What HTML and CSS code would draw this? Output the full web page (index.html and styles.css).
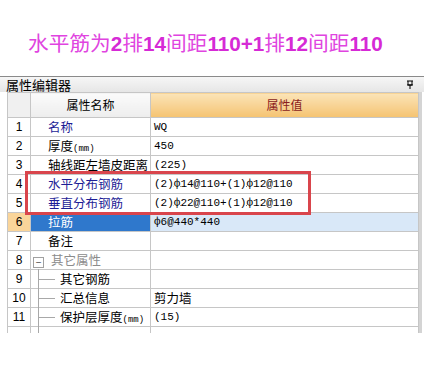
FILE: index.html
```html
<!DOCTYPE html>
<html lang="zh-CN">
<head>
    <meta charset="UTF-8">
    <title>属性编辑器</title>
    <link rel="stylesheet" href="styles.css">
</head>
<body>
    <div class="title">水平筋为<b>2</b>排<b>14</b>间距<b>110+1</b>排<b>12</b>间距<b>110</b></div>

    <div class="panel">
        <div class="panel-head">
            <span>属性编辑器</span>
            <svg class="pin" width="8" height="10" viewBox="0 0 8 10">
                <path d="M1 1h6M2 1v4h4V1M1 5h6M4 5v4" fill="none" stroke="#000" stroke-width="1"/>
            </svg>
        </div>
        <div class="grid-wrap">
            <div class="grid-box">
                <table class="props">
                    <colgroup>
                        <col class="c-num">
                        <col class="c-name">
                        <col class="c-val">
                    </colgroup>
                    <tr class="head">
                        <td class="num"></td>
                        <td class="name-h">属性名称</td>
                        <td class="val-h">属性值</td>
                    </tr>
                    <tr>
                        <td class="num">1</td>
                        <td class="name blue">名称</td>
                        <td class="val">WQ</td>
                    </tr>
                    <tr>
                        <td class="num">2</td>
                        <td class="name">厚度<small>(mm)</small></td>
                        <td class="val">450</td>
                    </tr>
                    <tr>
                        <td class="num">3</td>
                        <td class="name">轴线距左墙皮距离</td>
                        <td class="val">(225)</td>
                    </tr>
                    <tr>
                        <td class="num">4</td>
                        <td class="name blue">水平分布钢筋</td>
                        <td class="val">(2)<span class="g3">ф</span>14@110+(1)<span class="g3">ф</span>12@110</td>
                    </tr>
                    <tr>
                        <td class="num">5</td>
                        <td class="name blue">垂直分布钢筋</td>
                        <td class="val">(2)<span class="g3">ф</span>22@110+(1)<span class="g3">ф</span>12@110</td>
                    </tr>
                    <tr class="selected">
                        <td class="num">6</td>
                        <td class="name">拉筋</td>
                        <td class="val">ф6@440*440</td>
                    </tr>
                    <tr>
                        <td class="num">7</td>
                        <td class="name">备注</td>
                        <td class="val"></td>
                    </tr>
                    <tr>
                        <td class="num">8</td>
                        <td class="name group"><span class="toggle">−</span>其它属性</td>
                        <td class="val"></td>
                    </tr>
                    <tr>
                        <td class="num">9</td>
                        <td class="name child">其它钢筋</td>
                        <td class="val"></td>
                    </tr>
                    <tr>
                        <td class="num">10</td>
                        <td class="name child">汇总信息</td>
                        <td class="val cjk">剪力墙</td>
                    </tr>
                    <tr>
                        <td class="num">11</td>
                        <td class="name child">保护层厚度<small>(mm)</small></td>
                        <td class="val">(15)</td>
                    </tr>
                    <tr class="cut">
                        <td class="num"></td>
                        <td class="name child"></td>
                        <td class="val"></td>
                    </tr>
                </table>
                <div class="mark"></div>
            </div>
            <div class="vbar"></div>
        </div>
    </div>
</body>
</html>
```

FILE: styles.css
```css
body {
    margin: 0;
    background: #fff;
    font-family: "Noto Sans CJK SC", "Liberation Sans", sans-serif;
    color: #000;
}
.title {
    padding: 30px 0 0 28px;
    height: 46px;
    font-size: 20.7px;
    line-height: 25px;
    color: #e044e0;
    box-sizing: content-box;
}
.title b {
    font-family: "Liberation Sans", sans-serif;
    font-weight: bold;
    color: #d62ad6;
}
.panel {
    width: 424px;
}
.panel-head {
    display: flex;
    align-items: center;
    justify-content: space-between;
    height: 15px;
    border-top: 1px solid #8a8a8a;
    background: linear-gradient(#f6f6f6, #e6e6e6);
    padding-left: 6px;
    font-size: 13px;
    line-height: 15px;
}
.pin {
    margin-right: 10px;
}
.grid-wrap {
    display: flex;
    padding-left: 7px;
}
.grid-box {
    position: relative;
}
.props {
    border-collapse: collapse;
    table-layout: fixed;
    width: 412px;
    font-size: 12.5px;
}
.c-num { width: 23px; }
.c-name { width: 120px; }
.props td {
    border: 1px solid #c6c6c6;
    height: 18px;
    padding: 0;
    line-height: 18px;
    white-space: nowrap;
    overflow: hidden;
}
.props .head td {
    height: 24px;
    font-size: 12px;
}
.head .num {
    background: #f0f0f0;
}
.name-h {
    text-align: center;
    background: linear-gradient(#fbfbfb, #ededed);
}
.val-h {
    text-align: center;
    color: #8a1c1c;
    background: linear-gradient(#fbe4b8, #f5c371);
}
.num {
    text-align: center;
    font-family: "Liberation Sans", sans-serif;
    font-size: 12px;
}
.name {
    padding-left: 17px !important;
    position: relative;
}
.name small {
    font-family: "Liberation Mono", monospace;
    font-size: 9px;
    line-height: 0;
}
.blue {
    color: #1d1d96;
}
.val {
    padding-left: 3px !important;
    font-family: "Liberation Mono", monospace;
    font-size: 11px;
}
.val.cjk {
    font-family: "Noto Sans CJK SC", sans-serif;
    font-size: 12.5px;
}
.g3 {
    text-decoration: underline;
    text-underline-offset: -1px;
}
.selected .num {
    background: #fad59a;
}
.selected .name {
    background: #2f78cc;
    color: #fff;
}
.selected .val {
    background: #d9e8f8;
}
.group {
    color: #8c8c8c;
    padding-left: 2px !important;
}
.toggle {
    display: inline-block;
    width: 9px;
    height: 9px;
    border: 1px solid #a0a0a0;
    margin-right: 7px;
    font-size: 10px;
    line-height: 8px;
    text-align: center;
    color: #444;
    vertical-align: -1px;
}
.child {
    padding-left: 29px !important;
    overflow: visible !important;
}
.child::before {
    content: "";
    position: absolute;
    left: 7px;
    top: -1px;
    bottom: -1px;
    border-left: 1px solid #a8a8a8;
}
.child::after {
    content: "";
    position: absolute;
    left: 8px;
    top: 9px;
    width: 16px;
    border-top: 1px solid #a8a8a8;
}
.props .cut td {
    height: 6px;
    border-bottom: none;
}
.cut .child::after {
    display: none;
}
.vbar {
    width: 3px;
    background: #d4d4d4;
    height: 241px;
}
.mark {
    position: absolute;
    left: 18px;
    top: 79px;
    width: 280px;
    height: 38px;
    border: 3.5px solid #d9454c;
}
```
